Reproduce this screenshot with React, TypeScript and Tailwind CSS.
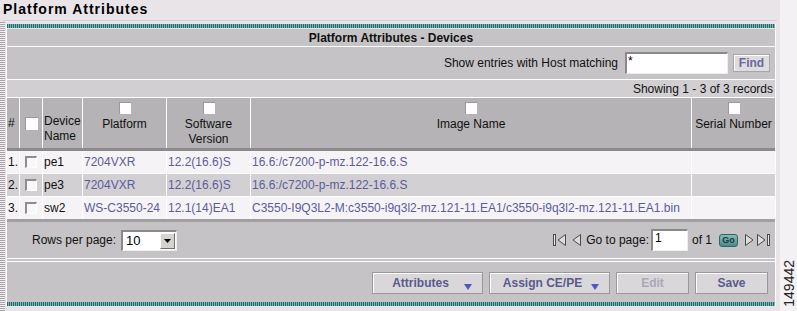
const cols = "grid grid-cols-[12px_22px_39px_83px_83px_440px_83px] gap-x-px";

const devices = [
  { n: "1.", name: "pe1", platform: "7204VXR", sw: "12.2(16.6)S", image: "16.6:/c7200-p-mz.122-16.6.S", bg: "bg-[#f5f3f5]" },
  { n: "2.", name: "pe3", platform: "7204VXR", sw: "12.2(16.6)S", image: "16.6:/c7200-p-mz.122-16.6.S", bg: "bg-[#d2d0d2]" },
  {
    n: "3.",
    name: "sw2",
    platform: "WS-C3550-24",
    sw: "12.1(14)EA1",
    image: "C3550-I9Q3L2-M:c3550-i9q3l2-mz.121-11.EA1/c3550-i9q3l2-mz.121-11.EA1.bin",
    bg: "bg-[#f5f3f5]",
  },
];

function HeadBox() {
  return <span className="block w-[12px] h-[12px] bg-white border-t border-l border-[#9a989a] border-r-[#f4f4f4] border-b-[#f4f4f4]" />;
}

function RowBox() {
  return <span className="block w-[12px] h-[12px] bg-[#f8f8f8] border-t-2 border-l-2 border-[#8e8c8e] border-r border-b border-r-white border-b-white" />;
}

function Teal() {
  return <div className="h-[4px] bg-[repeating-linear-gradient(90deg,#22706e_0px,#22706e_1px,#7fb3b1_1px,#7fb3b1_2px)]" />;
}

function Arrow({ dir, bar }: { dir: "left" | "right"; bar?: boolean }) {
  const w = bar ? 13 : 9;
  return (
    <svg width={w} height="14" viewBox={`0 0 ${w} 14`} className={dir === "right" ? "-scale-x-100" : ""}>
      {bar && <rect x="0.5" y="1.5" width="2" height="11" fill="#e8e8e8" stroke="#4a4a4a" />}
      <polygon
        points={bar ? "12.5,1.5 5,7 12.5,12.5" : "8.5,1.5 1,7 8.5,12.5"}
        fill="#dcdcdc"
        stroke="#4a4a4a"
        strokeLinejoin="round"
      />
    </svg>
  );
}

function ActionButton({ label, width, menu, disabled }: { label: string; width: string; menu?: boolean; disabled?: boolean }) {
  return (
    <button
      className={`relative ${width} h-[22px] bg-[#d9d7d9] border border-[#9a989a] shadow-[inset_1px_1px_0_#ffffff] text-[12px] font-bold flex items-center justify-center ${
        disabled ? "text-[#a9a8b6]" : "text-[#5a5a8e]"
      } ${menu ? "pr-[14px]" : ""}`}
    >
      {label}
      {menu && (
        <svg width="8" height="6" viewBox="0 0 8 6" className="absolute right-[10px] bottom-[3px]">
          <polygon points="0,0 8,0 4,6" fill="#4f56c8" />
        </svg>
      )}
    </button>
  );
}

export default function App() {
  return (
    <div className="w-[797px] h-[311px] overflow-hidden bg-[#e8e4e8] flex font-['Liberation_Sans',Arial,sans-serif] text-[12px] text-[#111]">
      <div className="w-[780px] flex flex-col">
        {/* Page title */}
        <div className="h-[20px] pl-[3px] pt-[1px] text-[14px] font-bold tracking-[1px] leading-[17px] text-black">
          Platform Attributes
        </div>
        <div className="h-px ml-[3px] w-[774px] bg-[#d6ced6]" />

        <div className="flex flex-1">
          <div className="w-[5px] mt-[1px] bg-[repeating-linear-gradient(0deg,#a8a4a8_0px,#a8a4a8_1px,#f2eef2_1px,#f2eef2_2px)]" />

          {/* Panel */}
          <div className="w-[770px] ml-px mt-[3px] self-start flex flex-col border-x border-white">
            <Teal />
            <div className="h-px bg-[#e6e6e6]" />
            <div className="h-[17px] bg-[#c5c3c5] flex items-center justify-center font-bold">
              Platform Attributes - Devices
            </div>
            <div className="h-px bg-white" />

            {/* Search */}
            <div className="h-[32px] bg-[#c5c3c5] flex items-center justify-end pr-[5px]">
              <span className="mr-[7px]">Show entries with Host matching</span>
              <div className="w-[103px] h-[22px] bg-white border-t-2 border-l-2 border-[#8a888a] border-r border-b border-r-[#eeeeee] border-b-[#eeeeee] px-[1px] leading-[14px] text-black">
                *
              </div>
              <button className="ml-[5px] w-[37px] h-[18px] bg-[#dedcde] border border-[#a8a6a8] shadow-[inset_1px_1px_0_#ffffff] text-[12px] font-bold text-[#6a6a9c] flex items-center justify-center">
                Find
              </button>
            </div>
            <div className="h-px bg-white" />

            <div className="h-[17px] bg-[#d1cfd1] flex items-center justify-end pr-[2px]">
              Showing 1 - 3 of 3 records
            </div>
            <div className="h-px bg-white" />

            {/* Header */}
            <div className={`${cols} bg-white h-[50px] leading-[15px]`}>
              <div className="bg-[#b5b3b5] pl-[1px] flex items-center">#</div>
              <div className="bg-[#b5b3b5] flex justify-center pt-[19px]">
                <span className="block w-[13px] h-[13px] bg-white border-t border-l border-[#9a989a] border-r-[#f4f4f4] border-b-[#f4f4f4]" />
              </div>
              <div className="bg-[#b5b3b5] pl-[1px] pt-[16px]">
                Device
                <br />
                Name
              </div>
              {["Platform", "Software Version", "Image Name", "Serial Number"].map((h) => (
                <div key={h} className="bg-[#b5b3b5] flex flex-col items-center pt-[4px] text-center">
                  <HeadBox />
                  <span className="mt-[3px]">
                    {h === "Software Version" ? (
                      <>
                        Software
                        <br />
                        Version
                      </>
                    ) : (
                      h
                    )}
                  </span>
                </div>
              ))}
            </div>
            <div className="h-[3px] bg-[#8c8a8c]" />

            {/* Rows */}
            <div className="flex flex-col gap-y-px bg-white">
              {devices.map((d) => (
                <div key={d.n} className={`${cols} h-[22px] bg-white`}>
                  <div className={`${d.bg} pl-[1px] flex items-center`}>{d.n}</div>
                  <div className={`${d.bg} flex items-center justify-center`}>
                    <RowBox />
                  </div>
                  <div className={`${d.bg} pl-[1px] flex items-center`}>{d.name}</div>
                  <div className={`${d.bg} pl-[1px] flex items-center text-[#5c5c9c] whitespace-nowrap`}>{d.platform}</div>
                  <div className={`${d.bg} pl-[1px] flex items-center text-[#5c5c9c] whitespace-nowrap`}>{d.sw}</div>
                  <div className={`${d.bg} pl-[1px] flex items-center text-[#5c5c9c] whitespace-nowrap overflow-hidden`}>{d.image}</div>
                  <div className={d.bg} />
                </div>
              ))}
            </div>
            <div className="h-[3px] bg-[#a19fa1]" />

            {/* Pagination */}
            <div className="h-[36px] bg-[#c5c3c5] flex items-center pl-[25px] pr-[5px]">
              <span>Rows per page:</span>
              <div className="ml-[5px] w-[56px] h-[21px] bg-white border-t-2 border-l-2 border-[#8a888a] border-r border-b border-r-[#eeeeee] border-b-[#eeeeee] flex items-center">
                <span className="flex-1 pl-[3px] text-[13px] text-black">10</span>
                <div className="w-[15px] h-[16px] mr-px bg-[#d6d3ce] border border-t-white border-l-white border-r-[#6e6e6e] border-b-[#6e6e6e] flex items-center justify-center">
                  <svg width="7" height="4" viewBox="0 0 7 4">
                    <polygon points="0,0 7,0 3.5,4" fill="#000" />
                  </svg>
                </div>
              </div>
              <div className="ml-auto flex items-center">
                <Arrow dir="left" bar />
                <span className="ml-[6px]">
                  <Arrow dir="left" />
                </span>
                <span className="ml-[5px]">Go to page:</span>
                <div className="ml-[2px] w-[37px] h-[22px] bg-white border-t-2 border-l-2 border-[#8a888a] border-r border-b border-r-[#eeeeee] border-b-[#eeeeee] pl-[2px] leading-[14px] text-black">
                  1
                </div>
                <span className="ml-[4px]">of 1</span>
                <span className="ml-[7px] w-[19px] h-[13px] rounded-[3px] bg-gradient-to-b from-[#86bcba] to-[#4c8a88] border border-[#2f6664] text-[9px] font-bold leading-[11px] text-[#163e3e] flex items-center justify-center">
                  Go
                </span>
                <span className="ml-[7px]">
                  <Arrow dir="right" />
                </span>
                <span className="ml-[3px]">
                  <Arrow dir="right" bar />
                </span>
              </div>
            </div>
            <div className="h-px bg-white" />
            <div className="h-[2px] bg-[#c5c3c5]" />
            <div className="h-px bg-white" />

            {/* Actions */}
            <div className="h-[40px] bg-[#c5c3c5] flex items-center justify-end pr-[7px] pt-[2px] gap-[6px]">
              <ActionButton label="Attributes" width="w-[111px]" menu />
              <ActionButton label="Assign CE/PE" width="w-[121px]" menu />
              <ActionButton label="Edit" width="w-[73px]" disabled />
              <ActionButton label="Save" width="w-[73px]" />
            </div>
            <Teal />
          </div>
        </div>
      </div>

      {/* Figure number strip */}
      <div className="w-[17px] bg-[#f3f1f3] flex items-end justify-center pb-[4px]">
        <span className="[writing-mode:vertical-rl] rotate-180 text-[14px] leading-[14px] text-[#222]">149442</span>
      </div>
    </div>
  );
}
